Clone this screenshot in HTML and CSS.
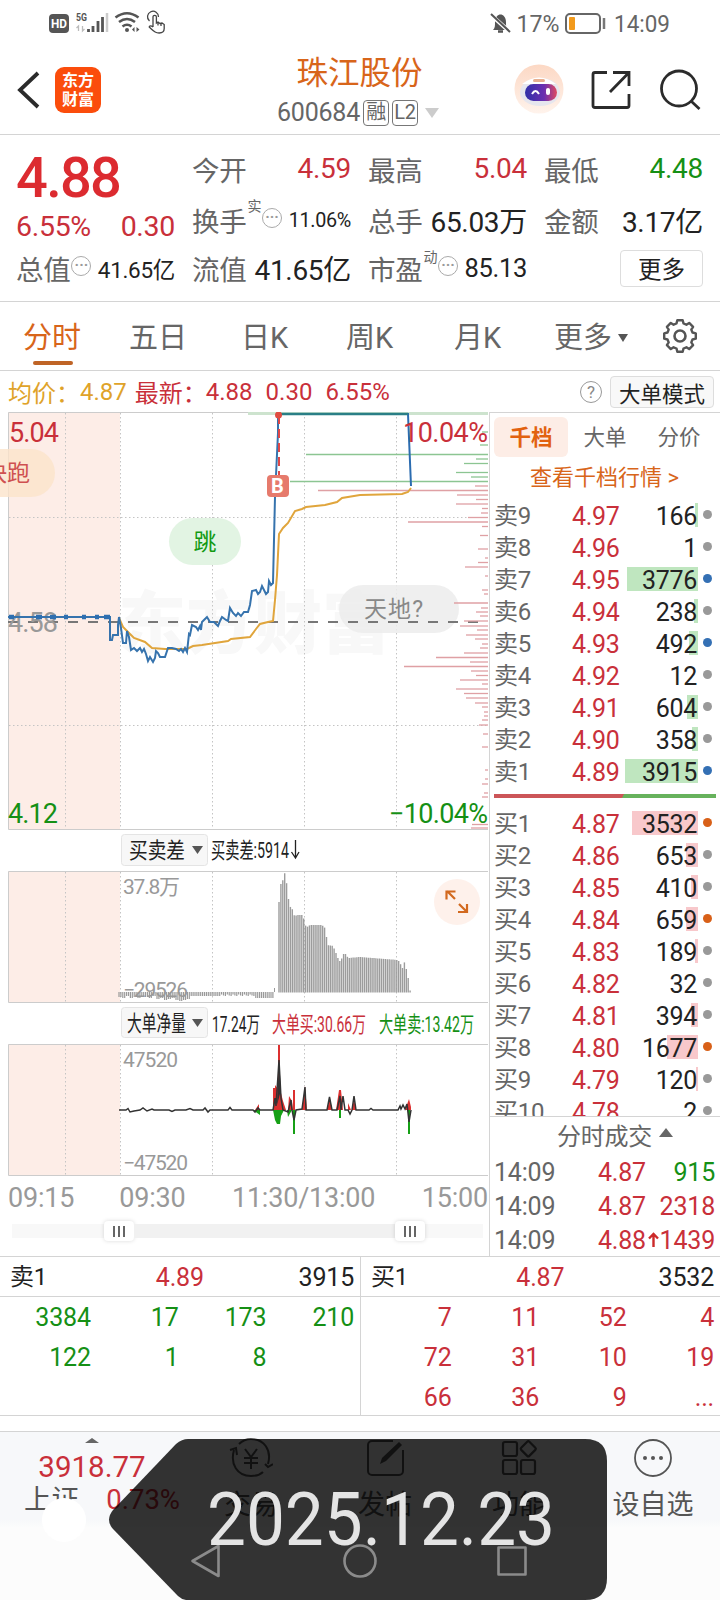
FILE: index.html
```html
<!DOCTYPE html>
<html lang="zh-CN">
<head>
    <meta charset="UTF-8">
    <meta name="viewport" content="width=device-width, initial-scale=1.0">
    <title>珠江股份 600684</title>
    <link rel="stylesheet" href="styles.css">
</head>
<body>
    <div class="status-bar">
        <svg class="status-left" width="120" height="46" viewBox="48 0 120 46">
            <rect x="49" y="14" width="20" height="19" rx="4" fill="#555"/>
            <text x="51" y="28" font-size="12" font-weight="700" fill="#fff" textLength="16" lengthAdjust="spacingAndGlyphs">HD</text>
            <text x="76" y="20.500" font-size="11" font-weight="700" fill="#555" textLength="11" lengthAdjust="spacingAndGlyphs">5G</text>
            <path d="M78.500 31v-5l-2 2M82.500 26v5l2-2" stroke="#bbb" fill="none" stroke-width="1.300"/>
            <path d="M88.500 32v-3M93 32v-6M98 32v-11M102.500 32v-15" stroke="#555" stroke-width="2.800"/>
            <path d="M107 32V13" stroke="#ccc" stroke-width="2.500"/>
            <g fill="none" stroke="#555" stroke-width="2.600">
                <path d="M115.500 17.500q11.500-8.500 23 0"/>
                <path d="M119 22q8-6 16 0"/>
                <path d="M122.500 26.500q4.500-3.500 9 0"/>
            </g>
            <circle cx="127" cy="30" r="2" fill="#555"/>
            <path d="M134.500 27v5l-2.500-2.500zM136.500 32v-5l3 2.500z" fill="#555"/>
            <path d="M149.500 21a5.500 5.500 0 1 1 9-4" stroke="#444" stroke-width="1.300" fill="none"/>
            <path d="M153 27V17a1.700 1.700 0 0 1 3.400 0v6l1.600-1 2 1.500 2-.5 2.200 1.500v4c0 3-1.500 4.500-5 4.500-4 0-5-1.500-10-6 0-1.500 2-1.500 3.800 0M158 22.500v3M161 23v3" fill="#fff" stroke="#444" stroke-width="1.300"/>
        </svg>
        <svg class="status-right" width="190" height="46" viewBox="485 0 190 46">
            <path d="M493 30c2-2 2-4 2-8 0-5 3-7.500 5.500-7.500s5.500 2.500 5.500 7.500c0 4 0 6 2 8z" fill="#555"/>
            <path d="M498 31.500h5" stroke="#555" stroke-width="2.500"/>
            <path d="M491 15l19 17" stroke="#fff" stroke-width="4"/>
            <path d="M491 14l19 18" stroke="#555" stroke-width="2"/>
            <text x="516.500" y="32" font-size="24" fill="#666" textLength="43" lengthAdjust="spacingAndGlyphs">17%</text>
            <rect x="566" y="14" width="34" height="19" rx="4" fill="none" stroke="#666" stroke-width="2"/>
            <rect x="569" y="17" width="6" height="13" rx="1" fill="#f29a1c"/>
            <path d="M604 18v11" stroke="#777" stroke-width="2.500"/>
            <text x="614" y="32" font-size="24" fill="#666" textLength="56" lengthAdjust="spacingAndGlyphs">14:09</text>
        </svg>
    </div>

    <header>
        <div class="header-left">
            <svg width="24" height="38" viewBox="0 0 24 38"><path d="M21 2L3 19l18 17" fill="none" stroke="#2b2b2b" stroke-width="3.800"/></svg>
            <div class="brand">东方<br>财富</div>
        </div>
        <div class="stock">
            <h1>珠江股份</h1>
            <div class="code"><span>600684</span><i>融</i><i>L2</i><b class="tri-down light"></b></div>
        </div>
        <svg class="header-icons" width="206" height="60" viewBox="510 60 206 60">
            <defs>
                <linearGradient id="face" x1="0" x2="1"><stop offset="0" stop-color="#3030a8"/><stop offset=".6" stop-color="#6b30b0"/><stop offset="1" stop-color="#e04a60"/></linearGradient>
                <linearGradient id="halo" x1="0" x2="0" y1="0" y2="1"><stop offset="0" stop-color="#fcd8c4"/><stop offset="1" stop-color="#fff3ec"/></linearGradient>
            </defs>
            <circle cx="539" cy="89" r="24.500" fill="url(#halo)"/>
            <ellipse cx="540" cy="92" rx="20" ry="14" fill="#e6e6ee"/>
            <path d="M522 84q17-13 34 0z" fill="#fff"/>
            <rect x="533" y="79" width="12" height="3" rx="1.500" fill="#e8b090"/>
            <rect x="525" y="84" width="32" height="17" rx="8.500" fill="url(#face)"/>
            <path d="M532 94q3.500-6 7 0" fill="none" stroke="#fff" stroke-width="2"/>
            <rect x="546" y="88" width="4" height="7" rx="2" fill="#fff"/>
            <g fill="none" stroke="#2b2b2b" stroke-width="2.800">
                <path d="M607 72.500h-12a2 2 0 0 0-2 2v31a2 2 0 0 0 2 2h32a2 2 0 0 0 2-2V94"/>
                <path d="M613 72.500h16V86M628.500 73L610 92"/>
                <circle cx="679" cy="88.500" r="17.500"/>
                <path d="M691 101l8.500 8"/>
            </g>
        </svg>
    </header>

    <section class="quote">
        <div class="quote-col first">
            <p class="price">4.88</p>
            <p class="red change"><span>6.55%</span><span>0.30</span></p>
            <p class="total"><label>总值</label><i class="dots">···</i><span class="small">41.65亿</span></p>
        </div>
        <div class="quote-col">
            <p><label>今开</label><span class="red">4.59</span></p>
            <p><label>换手</label><sup>实</sup><i class="dots">···</i><span class="tiny">11.06%</span></p>
            <p><label>流值</label><span>41.65亿</span></p>
        </div>
        <div class="quote-col">
            <p><label>最高</label><span class="red">5.04</span></p>
            <p><label>总手</label><span>65.03万</span></p>
            <p><label>市盈</label><sup>动</sup><i class="dots">···</i><span class="mid">85.13</span></p>
        </div>
        <div class="quote-col">
            <p><label>最低</label><span class="green">4.48</span></p>
            <p><label>金额</label><span>3.17亿</span></p>
            <p class="more-line"><button class="more">更多</button></p>
        </div>
    </section>

    <nav class="tabs">
        <span class="active">分时</span>
        <span>五日</span>
        <span>日K</span>
        <span>周K</span>
        <span>月K</span>
        <span>更多<b class="tri-down small-tri"></b></span>
        <svg width="36" height="36" viewBox="-18 -18 36 36">
            <path id="gear" fill="none" stroke="#555" stroke-width="2.400" stroke-linejoin="round"/>
            <circle r="5.500" fill="none" stroke="#555" stroke-width="2.600"/>
        </svg>
    </nav>

    <div class="info-row">
        <span class="gold">均价：</span><span class="gold num">4.87</span>
        <span class="red latest">最新：</span><span class="red num">4.88</span><span class="red num">0.30</span><span class="red num">6.55%</span>
        <span class="help">?</span>
        <button class="mode">大单模式</button>
    </div>

    <main>
        <section class="charts">
            <!-- price chart -->
            <svg width="489" height="418" viewBox="0 412 489 418">
                <rect x="8" y="412" width="112" height="417" fill="#fdede7"/>
                <text x="118" y="648" font-size="68" font-weight="900" fill="#f8f8f8" textLength="272">东方财富</text>
                <g class="grid">
                    <path d="M65.500 413v416M120.500 413v416M212.500 413v416M304.500 413v416M396.500 413v416M9 517.500h479M9 725.500h479"/>
                </g>
                <path class="frame" d="M488 412.500H8.500V829.500H488"/>
                <rect x="339" y="585" width="120" height="48" rx="24" fill="#ececec" opacity=".85"/>
                <path d="M8 622H478" stroke="#777" stroke-width="2" stroke-dasharray="10 10"/>
                <text x="8" y="631.500" class="axis" textLength="50">4.58</text>
                <text x="364" y="617" font-size="23" fill="#888" textLength="59">天地?</text>
                <rect x="-30" y="449" width="85" height="48" rx="24" fill="#fbe3cb" opacity=".8"/>
                <text x="-16" y="481" font-size="23" fill="#cf5050">快跑</text>
                <rect x="169" y="518" width="72" height="47" rx="23.500" fill="#e2f4e3"/>
                <text x="193.500" y="549.500" font-size="23" fill="#129a12">跳</text>
                <path d="M248 413.500h240" stroke="#cde3ce" stroke-width="3"/>
                <g id="depth"></g>
                <polyline class="avg" points="119,618 123,627 130,634 134,638 145,642 152,648 165,649 187,649 193,646 202,645 215,643 228,641 231,639 250,637 256,629 260,624 268,622 273,621 275,600 277,575 279,534 283,528 288,523 295,511 302,509 306,507 325,505 337,502 342,498 360,495 402,494 408,492 411,488"/>
                <polyline class="now" points="8,617 110,617 110,640 112,640 113,635 118,635 118,625 119,617 121,628 123,643 126,643 127,631 129,637 131,650 134,648 137,651 140,648 142,652 144,649 146,654 148,661 150,657 153,662 155,658 156,651 158,653 160,657 165,657 168,648 172,648 176,649 179,651 181,649 183,652 185,648 187,652 189,634 190,635 192,625 196,627 198,630 200,626 201,630 202,622 205,619 207,617 210,622 214,622 218,626 220,621 222,617 226,620 228,621 230,608 233,613 236,616 238,613 241,616 244,612 248,612 250,605 252,591 256,590 258,594 260,592 262,586 266,594 268,592 269,581 271,585 273,583 275,497 278,433 278,414"/>
                <polyline points="278,414 408,414 411,486" fill="none" stroke="#2b6cb0" stroke-width="2"/>
                <path d="M279 414H408" stroke="#2a7f86" stroke-width="2.500"/>
                <path d="M9 617h5M36 617h6M50 617h6M64 617h4M82 617h4M95 617h4M104 617h6" stroke="#2f6fb0" stroke-width="4.500"/>
                <path d="M279 415V475" stroke="#e04848" stroke-width="2" stroke-dasharray="9 5"/>
                <circle cx="278.500" cy="415" r="3.500" fill="#e04c40"/>
                <rect x="267" y="475" width="22" height="22" rx="4" fill="#e67a6c"/>
                <text x="271" y="493" font-size="20" font-weight="700" fill="#fff">B</text>
                <text x="9" y="442" class="axis fill-red" textLength="50">5.04</text>
                <text x="403" y="442" class="axis fill-red" textLength="85">10.04%</text>
                <text x="8" y="823" class="axis fill-green" textLength="50">4.12</text>
                <text x="389" y="823" class="axis fill-green" textLength="99">−10.04%</text>
            </svg>

            <!-- buy/sell gap -->
            <svg width="489" height="173" viewBox="0 830 489 173">
                <rect class="select" x="121.500" y="834.500" width="86" height="31" rx="3"/>
                <text x="129" y="858" font-size="22" fill="#222" textLength="56" lengthAdjust="spacingAndGlyphs">买卖差</text>
                <path d="M192 846h11l-5.500 8z" fill="#555"/>
                <text x="211" y="858" font-size="22" fill="#222" textLength="78" lengthAdjust="spacingAndGlyphs">买卖差:5914</text>
                <path d="M295.500 840v17M291.500 852l4 6 3.500-6" fill="none" stroke="#222" stroke-width="1.300"/>
                <rect x="8" y="871" width="112" height="131" fill="#fdede7"/>
                <g class="grid"><path d="M65.500 872v130M120.500 872v130M212.500 872v130M304.500 872v130M396.500 872v130"/></g>
                <path class="frame" d="M488 871.500H8.500V1002.500H488"/>
                <text x="123" y="894" class="sub-axis" textLength="57">37.8万</text>
                <text x="123" y="997" class="sub-axis" textLength="65">−29526</text>
                <g id="gapBars"></g>
                <circle cx="457" cy="902" r="23" fill="#fef1eb"/>
                <path d="M455 899l-8-8M446.500 899.500v-8h9M459 904l8 8M458 912h9v-8" fill="none" stroke="#d2691e" stroke-width="2.200"/>
            </svg>

            <!-- big order net volume -->
            <svg width="489" height="174" viewBox="0 1003 489 174">
                <rect class="select" x="121.500" y="1007.500" width="86" height="30" rx="3"/>
                <text x="127" y="1031" font-size="22" fill="#222" textLength="59" lengthAdjust="spacingAndGlyphs">大单净量</text>
                <path d="M192 1019h11l-5.500 8z" fill="#555"/>
                <text x="212" y="1032" font-size="22" fill="#222" textLength="48" lengthAdjust="spacingAndGlyphs">17.24万</text>
                <text x="272" y="1032" font-size="22" class="fill-red" textLength="94" lengthAdjust="spacingAndGlyphs">大单买:30.66万</text>
                <text x="379" y="1032" font-size="22" class="fill-green" textLength="95" lengthAdjust="spacingAndGlyphs">大单卖:13.42万</text>
                <rect x="8" y="1044" width="112" height="131" fill="#fdede7"/>
                <g class="grid"><path d="M65.500 1045v130M120.500 1045v130M212.500 1045v130M304.500 1045v130M396.500 1045v130"/></g>
                <path class="frame" d="M488 1044.500H8.500V1175.500H488"/>
                <text x="123" y="1066.500" class="sub-axis" textLength="55">47520</text>
                <text x="123" y="1169.500" class="sub-axis" textLength="65">−47520</text>
                <path fill="#dc3030" d="M255 1110l4-6v6zM273 1110v-22h2v-3l3 4v-44h2v44l3 12 3 9zM288 1110l1-14 3 5 1 9zM293 1110v-20h2v20zM302 1110l3-24 2 24zM327 1110l3-12 2 12zM336 1110l3-20h2l2 20zM348 1110v-7l3 7zM352 1110l2-12 2 12zM405 1110l4-11 2 8v3z"/>
                <path fill="#16a016" d="M253 1110h7v5zM273 1110h11l-3 6-1 8h-3l-2-4zM287 1110h5l-4 7zM293 1110h2v24h-2zM339 1110h2v8h-2zM408 1110h2v24h-2z"/>
                <polyline fill="none" stroke="#333" stroke-width="1.500" points="119,1110 126,1110 128,1108.500 130,1112 134,1111 140,1110 143,1108 147,1111 152,1109 154,1110 169,1110 172,1111.500 175,1110 186,1110 190,1108.500 193,1110 203,1110 205,1108 208,1112 210,1110 228,1110 230,1107.500 232,1110 253,1110 255,1112 258,1108 260,1110 273,1110 275,1098 276,1106 279,1060 281,1098 283,1110 288,1112 291,1100 292,1110 294,1120 296,1110 302,1109 305,1087 306,1110 327,1110 329.500,1097 332,1110 337,1110 340,1096 341,1110 343,1096 345,1110 348,1110 350,1114 352,1110 354,1096 356,1110 369,1110 371,1108.500 373,1110 398,1110 400,1106 401,1109 403,1105 405,1109 407,1104 409,1122 411,1110"/>
                <path d="M279 1060l2 30-4 15z" fill="#333"/>
            </svg>

            <div class="time-axis"><span>09:15</span><span>09:30</span><span>11:30/13:00</span><span>15:00</span></div>
            <div class="slider"><div class="track"><i></i><div class="range"></div><i></i></div></div>
        </section>

        <aside>
            <div class="book-tabs"><span class="active">千档</span><span>大单</span><span>分价</span></div>
            <a class="book-link">查看千档行情 &gt;</a>
            <div id="sells"></div>
            <div class="ratio"></div>
            <div id="buys"></div>
            <div class="trades">
                <p class="trades-title">分时成交<b class="tri-up"></b></p>
                <p><time>14:09</time><span class="red">4.87</span><em></em><span class="green">915</span></p>
                <p><time>14:09</time><span class="red">4.87</span><em></em><span class="red">2318</span></p>
                <p><time>14:09</time><span class="red">4.88</span><em><svg width="11" height="16" viewBox="0 0 11 16"><path d="M5.500 15V2M1 6.500L5.500 2 10 6.500" fill="none" stroke="#cc2a2a" stroke-width="2.400"/></svg></em><span class="red">1439</span></p>
            </div>
        </aside>
    </main>

    <section class="queues">
        <div class="queue">
            <div class="queue-head"><span>卖1</span><span class="red">4.89</span><span>3915</span></div>
            <div class="queue-grid green"><span>3384</span><span>17</span><span>173</span><span>210</span><span>122</span><span>1</span><span>8</span></div>
        </div>
        <div class="queue">
            <div class="queue-head"><span>买1</span><span class="red">4.87</span><span>3532</span></div>
            <div class="queue-grid red"><span>7</span><span>11</span><span>52</span><span>4</span><span>72</span><span>31</span><span>10</span><span>19</span><span>66</span><span>36</span><span>9</span><span>...</span></div>
        </div>
    </section>

    <footer>
        <div class="index">
            <b class="tri-up"></b>
            <strong>3918.77</strong>
            <p><span>上证</span><span class="red">0.73%</span></p>
        </div>
        <div class="action">
            <svg width="44" height="40" viewBox="0 0 44 40"><g fill="none" stroke="#555" stroke-width="2">
                <path d="M5 12c-4 14 3 26 17 26 5 0 9-1 12-4M39 26C43 12 35 1 22 1c-5 0-9 2-12 5M1 12l6-2 1 7M36 26l3 3 5-3"/>
                <path d="M16 11l6 8 6-8M22 19v12M15 20h14M15 25h14"/></g></svg>
            <span>交易</span>
        </div>
        <div class="action">
            <svg width="40" height="40" viewBox="0 0 40 40"><path d="M28 3H7a4 4 0 0 0-4 4v26a4 4 0 0 0 4 4h27a4 4 0 0 0 4-4V12" fill="none" stroke="#555" stroke-width="2"/><path d="M15 26l2-6L34 4l3 3-16 16z" fill="#555"/></svg>
            <span>发帖</span>
        </div>
        <div class="action">
            <svg width="40" height="40" viewBox="0 0 40 40"><g fill="none" stroke="#555" stroke-width="2.200"><rect x="4" y="4" width="14" height="14" rx="2"/><rect x="4" y="22" width="14" height="14" rx="2"/><rect x="22" y="22" width="14" height="14" rx="2"/><rect x="23.500" y="5" width="11.500" height="11.500" rx="1.500" transform="rotate(45 29.200 10.800)"/></g></svg>
            <span>功能</span>
        </div>
        <div class="action">
            <svg width="40" height="40" viewBox="0 0 40 40"><circle cx="20" cy="20" r="18" fill="none" stroke="#555" stroke-width="1.800"/><circle cx="12" cy="20" r="2" fill="#555"/><circle cx="20" cy="20" r="2" fill="#555"/><circle cx="28" cy="20" r="2" fill="#555"/></svg>
            <span>设自选</span>
        </div>

        <!-- date stamp and system navigation keys -->
        <svg class="stamp" width="720" height="168" viewBox="0 1432 720 168">
            <circle cx="64" cy="1520" r="22" fill="#fff"/>
            <path d="M188 1439H585q22 0 22 22V1578q0 22-22 22H186q-5-1-8-4L113 1529q-8-9 0-19L176 1444q6-5 12-5z" fill="#000" fill-opacity=".8"/>
            <g fill="none" stroke="#8b8b8b" stroke-width="2.600" stroke-linejoin="round">
                <path d="M218.500 1546v30l-26-15z"/>
                <circle cx="360" cy="1561" r="15.500"/>
                <rect x="498.500" y="1547.500" width="27" height="27"/>
            </g>
            <text x="207" y="1545" font-size="74" fill="#e4e4e4" textLength="348" lengthAdjust="spacingAndGlyphs">2025.12.23</text>
        </svg>
    </footer>

    <script>
        const SVG = 'http://www.w3.org/2000/svg';

        function addLine(parent, x1, y1, x2, y2, color, width) {
            const line = document.createElementNS(SVG, 'path');
            line.setAttribute('d', `M${x1} ${y1}L${x2} ${y2}`);
            line.setAttribute('stroke', color);
            line.setAttribute('stroke-width', width);
            parent.appendChild(line);
        }

        // Order book: [label, price, volume, dot color]
        const sells = [
            ['卖9', '4.97', 166, 'gray'], ['卖8', '4.96', 1, 'gray'], ['卖7', '4.95', 3776, 'blue'],
            ['卖6', '4.94', 238, 'gray'], ['卖5', '4.93', 492, 'blue'], ['卖4', '4.92', 12, 'gray'],
            ['卖3', '4.91', 604, 'gray'], ['卖2', '4.90', 358, 'gray'], ['卖1', '4.89', 3915, 'blue']
        ];
        const buys = [
            ['买1', '4.87', 3532, 'orange'], ['买2', '4.86', 653, 'gray'], ['买3', '4.85', 410, 'gray'],
            ['买4', '4.84', 659, 'orange'], ['买5', '4.83', 189, 'gray'], ['买6', '4.82', 32, 'gray'],
            ['买7', '4.81', 394, 'gray'], ['买8', '4.80', 1677, 'orange'], ['买9', '4.79', 120, 'gray'],
            ['买10', '4.78', 2, 'gray']
        ];

        function showBook(id, rows) {
            document.getElementById(id).innerHTML = rows.map(([label, price, volume, dot]) => `
                <div class="book-row">
                    <span class="label">${label}</span>
                    <span class="red">${price}</span>
                    <span class="volume"><i style="width:${Math.floor(volume * 0.0189)}px"></i>${volume}</span>
                    <b class="dot ${dot}"></b>
                </div>`).join('');
        }
        showBook('sells', sells);
        showBook('buys', buys);

        // Depth lines on the right edge of the price chart: [y, start x]
        const green = [[432, 482], [445, 480], [454.5, 306], [459, 476], [463.5, 464], [472.5, 456], [477, 471], [481.5, 290]];
        const red = [[486, 475], [490.5, 318], [495, 457], [499.5, 476], [504, 456], [508.5, 482], [513, 481], [517.5, 468],
            [522, 408], [526.5, 482], [535.5, 480], [549, 478], [558, 485], [562.5, 478], [567, 465], [576, 485], [590, 482],
            [594, 484], [603, 454], [608, 481], [612, 476], [616, 480], [621, 464], [626, 460], [630, 477], [635, 466],
            [639, 475], [644, 482], [648, 480], [653, 464], [657.5, 436], [662, 470], [666.5, 404], [671, 471], [675.5, 476],
            [680, 460], [684, 482], [689, 456], [693.5, 464], [698, 466], [703, 475], [707, 482], [712, 484], [716, 484],
            [720, 482], [725, 479], [734, 483], [747, 482], [770, 485], [779, 485], [784, 482], [793, 484], [797, 482],
            [824.5, 472], [828, 471]];
        const depth = document.getElementById('depth');
        green.forEach(([y, x]) => addLine(depth, x, y, 488, y, '#8cc592', 1.3));
        red.forEach(([y, x]) => addLine(depth, x, y, 488, y, '#dfa0a4', 1.3));

        // Gap histogram: tops between key points are interpolated
        const tops = [[279, 902], [281, 883], [283, 880], [285, 872], [287, 886], [288, 896], [290, 908], [291.5, 904],
            [293, 914], [295, 916], [297, 915], [303.5, 915], [304, 924], [307, 927], [310, 925], [322, 925], [326, 929],
            [327, 945], [333, 946], [336, 953], [339, 961], [341, 961], [343, 954], [346, 954], [348, 958], [360, 957],
            [398, 960], [400, 963], [402.5, 968], [404, 961], [406, 968], [408, 975], [409, 990], [411, 991]];
        const gapBars = document.getElementById('gapBars');
        let k = 0;
        for (let x = 279; x < 411; x += 1.9) {
            while (tops[k + 1][0] < x) k++;
            const [x0, y0] = tops[k];
            const [x1, y1] = tops[k + 1];
            addLine(gapBars, x, 992.5, x, y0 + (y1 - y0) * (x - x0) / (x1 - x0), '#9c9c9c', 1.4);
        }
        const dips = [5, 6, 4, 6, 5, 6, 4, 5, 6, 4, 7, 6, 8, 7, 6, 8, 9, 8, 7, 8, 7, 6, 6, 7, 6, 5, 6];
        for (let i = 0; i < 82; i++) {
            const dip = i < 54 ? (dips[i >> 1] || 4) : i < 72 ? 2.5 + i % 3 : 6;
            const small = i > 37 && i < 72 ? Math.min(dip, 4) : dip;
            addLine(gapBars, 119 + i * 1.9, 992, 119 + i * 1.9, 992 + small, '#999', 1.2);
        }
        addLine(gapBars, 274.5, 992, 274.5, 988, '#999', 1);

        // Gear outline
        let gear = '';
        for (let i = 0; i < 8; i++) {
            [[-0.27, 13], [-0.17, 16], [0.17, 16], [0.27, 13]].forEach(([d, r]) => {
                const a = i * Math.PI / 4 + d;
                gear += (gear ? 'L' : 'M') + (Math.sin(a) * r).toFixed(1) + ' ' + (-Math.cos(a) * r).toFixed(1);
            });
        }
        document.getElementById('gear').setAttribute('d', gear + 'z');
    </script>
</body>
</html>
```

FILE: styles.css
```css
* {
    box-sizing: border-box;
}

body {
    font-family: Roboto, "Noto Sans CJK SC", sans-serif;
    margin: 0;
    width: 720px;
    height: 1600px;
    overflow: hidden;
    background: #fff;
    color: #222;
}

h1, p {
    margin: 0;
    font-weight: normal;
}

i, em {
    font-style: normal;
}

svg {
    display: block;
    flex: none;
}

button {
    font-family: inherit;
    color: #222;
    background: #fff;
    border: 1px solid #ddd;
    border-radius: 4px;
    padding: 0;
}

.red { color: #c9303a; }
.green { color: #159015; }
.gold { color: #dfa32a; }
.fill-red { fill: #c9303a; }
.fill-green { fill: #159015; }

.tri-down, .tri-up {
    display: inline-block;
    border: 7px solid transparent;
}

.tri-down {
    border-top: 10px solid #555;
    border-bottom: 0;
}

.tri-up {
    border-bottom: 9px solid #666;
    border-top: 0;
}

.tri-down.light { border-top-color: #ccc; }

/* Status bar */
.status-bar {
    display: flex;
    justify-content: space-between;
    height: 46px;
    padding: 0 45px 0 48px;
}

/* Header */
header {
    display: flex;
    justify-content: space-between;
    height: 89px;
    border-bottom: 1px solid #d4d4d4;
}

.header-left {
    display: flex;
    align-items: center;
    width: 210px;
    padding: 0 0 0 17px;
    gap: 14px;
}

.brand {
    width: 46px;
    height: 46px;
    border-radius: 9px;
    background: #fb4d0c;
    color: #fff;
    font-size: 16px;
    font-weight: 700;
    line-height: 19px;
    text-align: center;
    padding-top: 4px;
}

.stock {
    width: 300px;
    text-align: center;
    padding-top: 8px;
}

.stock h1 {
    font-size: 31.5px;
    line-height: 40px;
    color: #d8651a;
    margin-right: 1px;
}

.code {
    display: flex;
    align-items: center;
    justify-content: center;
    height: 37px;
    font-size: 25px;
    letter-spacing: -0.2px;
    color: #666;
    margin-right: 4px;
}

.code i {
    font-size: 20px;
    line-height: 23px;
    min-width: 26px;
    height: 26px;
    border: 1.5px solid #777;
    border-radius: 4px;
    margin-left: 3px;
    text-align: center;
}

.code .tri-down {
    margin-left: 7px;
}

.header-icons {
    margin: 14px 4px 0 0;
}

/* Quote */
.quote {
    display: flex;
    gap: 17px;
    height: 167px;
    padding: 9px 16px 0 16px;
    border-bottom: 1px solid #d4d4d4;
}

.quote-col {
    width: 159px;
}

.quote-col p {
    display: flex;
    align-items: center;
    height: 49.5px;
    font-size: 28px;
    letter-spacing: -0.3px;
    white-space: nowrap;
}

.quote-col p:nth-child(2) {
    height: 53px;
}

.quote-col p:nth-child(3) {
    height: 43px;
}

.quote-col p > span:last-child {
    margin-left: auto;
}

.quote-col label {
    font-size: 27.5px;
    color: #666;
}

.quote-col .price {
    height: 57px;
    font-size: 56px;
    font-weight: 500;
    color: #dc2b30;
    letter-spacing: -1.7px;
    padding-top: 11px;
}

.quote-col p.change {
    height: 51px;
    font-size: 28.5px;
}

.quote-col p.total {
    height: 31px;
}

.quote-col .small { font-size: 22.5px; }
.quote-col .tiny { font-size: 19.8px; }
.quote-col .mid { font-size: 25.5px; }

.dots {
    flex: none;
    width: 20px;
    height: 20px;
    border: 1.5px solid #aaa;
    border-radius: 50%;
    font-size: 15px;
    font-weight: 700;
    line-height: 17px;
    letter-spacing: 0;
    text-align: center;
    color: #999;
    margin: 0 0 4px 1px;
}

.quote-col sup {
    font-size: 14px;
    line-height: 14px;
    color: #666;
    align-self: flex-start;
    margin: 5px 0 0 1px;
}

.quote-col p:nth-child(3) sup {
    margin-top: 3px;
}

.more-line {
    justify-content: flex-end;
}

.more {
    width: 83px;
    height: 37px;
    font-size: 23.5px;
}

/* Tabs */
.tabs {
    display: grid;
    grid-template-columns: 106px 112px 105px 108px 100px 108px 36px;
    align-items: center;
    height: 69px;
    padding-left: 23px;
    border-bottom: 1px solid #d4d4d4;
    font-size: 29px;
    color: #666;
}

.tabs span {
    position: relative;
    top: -1px;
    white-space: nowrap;
}

.tabs .active {
    color: #d8651a;
}

.tabs .active::after {
    content: "";
    position: absolute;
    left: 10px;
    bottom: -9px;
    width: 40px;
    height: 4px;
    border-radius: 2px;
    background: #bf6426;
}

.small-tri {
    border-width: 8px 5px 0;
    margin-left: 6px;
    vertical-align: 6px;
}

/* Average and latest price */
.info-row {
    display: flex;
    align-items: center;
    height: 41px;
    padding: 0 6px 0 8px;
    font-size: 24px;
}

.info-row .num { margin-right: 13px; }
.info-row .num.gold { margin-right: 8px; }
.info-row .latest { margin-right: -1px; }

.help {
    width: 22px;
    height: 22px;
    border: 1.5px solid #999;
    border-radius: 50%;
    font-size: 17px;
    line-height: 20px;
    text-align: center;
    color: #888;
    margin: 0 8px 0 auto;
}

.mode {
    width: 104px;
    height: 32px;
    font-size: 21.5px;
    background: #f8f8f8;
}

/* Charts */
main {
    display: flex;
    height: 844px;
}

.charts {
    width: 489px;
}

.grid path {
    stroke: #c4c4c4;
    stroke-dasharray: 1.5 2.5;
    fill: none;
}

.frame {
    stroke: #ccc;
    fill: none;
}

.avg {
    fill: none;
    stroke: #e0a53c;
    stroke-width: 2;
}

.now {
    fill: none;
    stroke: #3673ad;
    stroke-width: 2;
}

.axis { font-size: 27px; }
.axis:not([class*="fill"]) { fill: #999; }

.sub-axis {
    font-size: 21px;
    fill: #999;
}

.select {
    fill: #f7f7f7;
    stroke: #e4e4e4;
}

.time-axis {
    display: flex;
    height: 38px;
    padding: 3px 1px 0 8px;
    align-items: center;
    font-size: 27px;
    letter-spacing: -0.2px;
    color: #999;
}

.time-axis span:nth-child(2) { margin-left: 45px; }
.time-axis span:nth-child(3) { margin-left: auto; }
.time-axis span:nth-child(4) { margin-left: auto; }

.slider {
    height: 41px;
    padding: 9px 6px 0 12px;
}

.track {
    display: flex;
    align-items: center;
    height: 14px;
    padding: 0 58px 0 92px;
    background: #f8f8f8;
}

.track i {
    flex: none;
    width: 30px;
    height: 20px;
    border-radius: 4px;
    background: linear-gradient(90deg, #666 2px, transparent 2px 5px, #666 5px 7px, transparent 7px 10px, #666 10px 12px, transparent 12px) 9px 5px / 12px 11px no-repeat #fff;
    box-shadow: 0 0 4px rgba(0, 0, 0, 0.15);
}

.range {
    flex: 1;
    height: 14px;
    background: #f1f1f1;
}

/* Order book */
aside {
    display: flex;
    flex-direction: column;
    width: 231px;
    border-left: 1px solid #d4d4d4;
    border-top: 1px solid #d4d4d4;
}

.book-tabs {
    display: flex;
    padding: 4px 4px 0;
    height: 47px;
    font-size: 21.5px;
    line-height: 42px;
    color: #666;
}

.book-tabs span {
    width: 74px;
    height: 40px;
    text-align: center;
}

.book-tabs .active {
    background: #fdede6;
    border-radius: 6px;
    color: #e2620f;
    font-weight: 700;
}

.book-link {
    height: 40px;
    line-height: 36px;
    padding-left: 40px;
    font-size: 22px;
    color: #d8651a;
}

.book-row {
    display: flex;
    align-items: center;
    height: 32px;
    padding: 2px 0 0 4px;
    font-size: 25px;
    line-height: 30px;
    letter-spacing: -0.3px;
}

.book-row .label {
    width: 78px;
    height: 32px;
    font-size: 24px;
    color: #666;
}

.book-row .volume {
    position: relative;
    z-index: 0;
    flex: 1;
    text-align: right;
}

/* Volume bar lies under the number */
.volume i {
    position: absolute;
    z-index: -1;
    right: -1px;
    top: 1px;
    height: 24px;
    background: #bfe6bf;
}

#buys .volume i {
    background: #f8c8cb;
}

.dot {
    width: 9px;
    height: 9px;
    border-radius: 50%;
    margin: 0 8px 5px 6px;
    background: #999;
}

.dot.blue { background: #3470b4; }
.dot.orange { background: #d86018; }

.ratio {
    height: 4px;
    margin: 6px 4px 10px;
    background: linear-gradient(115deg, #cc5558 58%, #67b25c 58%);
}

#buys {
    height: 308px;
    overflow: hidden;
}

.trades {
    border-top: 1px solid #d4d4d4;
    height: 140px;
    padding: 0 5px 0 4px;
}

.trades p {
    display: flex;
    align-items: center;
    height: 34px;
    font-size: 25px;
    letter-spacing: -0.2px;
    padding-top: 2px;
}

.trades .trades-title {
    height: 37px;
    justify-content: center;
    font-size: 24px;
    color: #666;
    padding: 0 0 2px 21px;
}

.trades-title .tri-up {
    margin: -4px 0 0 7px;
}

.trades time {
    width: 104px;
    color: #666;
}

.trades em {
    margin-left: 2px;
}

.trades p span:last-child {
    margin-left: auto;
}

/* Queues */
.queues {
    display: flex;
    height: 160px;
    border-top: 1px solid #d4d4d4;
    border-bottom: 1px solid #d4d4d4;
    font-size: 25px;
    letter-spacing: -0.2px;
}

.queue {
    width: 360px;
}

.queue + .queue {
    border-left: 1px solid #d4d4d4;
}

.queue-head {
    display: flex;
    justify-content: space-between;
    align-items: center;
    height: 40px;
    padding: 2px 6px 0 10px;
    line-height: 32px;
    border-bottom: 1px solid #d4d4d4;
}

.queue-head span:first-child {
    width: 51px;
    height: 33px;
    font-size: 24px;
}

.queue-grid {
    display: grid;
    grid-template-columns: repeat(4, 1fr);
    grid-auto-rows: 40px;
    align-items: center;
    text-align: right;
    padding: 0 6px 0 3px;
}

/* Bottom bar */
footer {
    position: relative;
    display: flex;
    height: 169px;
    margin-top: 15px;
    border-top: 1px solid #d4d4d4;
    background: linear-gradient(#f7f8fa 88px, #fcfcfc 96px);
    color: #555;
}

.index {
    width: 184px;
    text-align: center;
}

.index .tri-up {
    display: block;
    width: 14px;
    border-bottom-width: 5px;
    margin: 6px auto 5px;
}

.index strong {
    display: block;
    font-size: 29.5px;
    font-weight: 400;
    line-height: 38px;
    color: #c9303a;
}

.index p {
    display: flex;
    justify-content: space-between;
    padding: 0 4px 0 24px;
    font-size: 27.5px;
    line-height: 27px;
}

.action {
    display: flex;
    flex-direction: column;
    align-items: center;
    width: 134px;
    padding-top: 6px;
    font-size: 27px;
}

.action span {
    line-height: 40px;
    margin-top: 7px;
}

.stamp {
    position: absolute;
    left: 0;
    top: 0;
}
```
